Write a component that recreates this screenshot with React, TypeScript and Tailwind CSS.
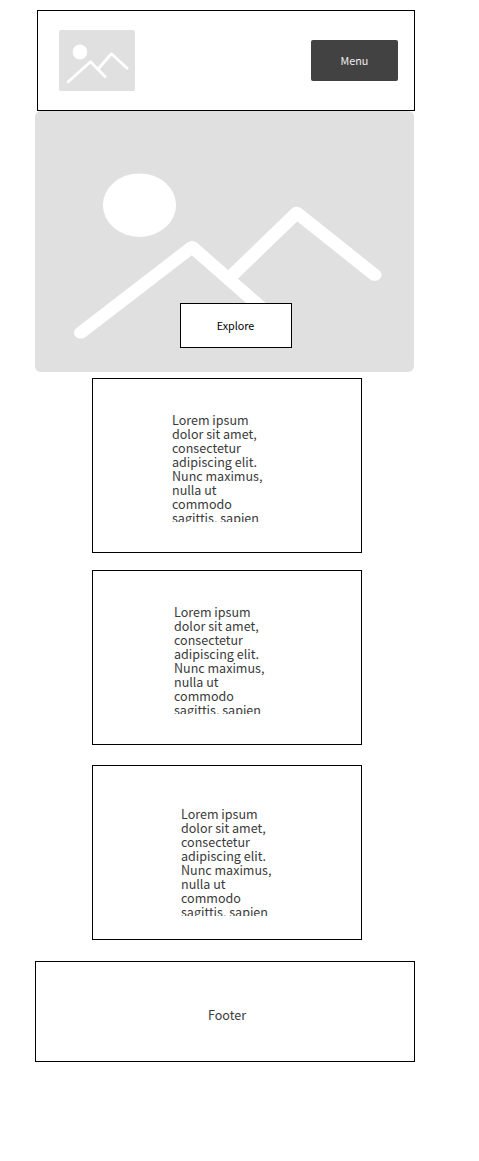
type CardProps = { className: string };

function Placeholder({ className }: { className: string }) {
  return (
    <svg viewBox="0 0 76 61" preserveAspectRatio="none" className={className} fill="none" aria-hidden="true">
      <ellipse cx="20.95" cy="22" rx="7.33" ry="7.42" fill="#fff" />
      <g stroke="#fff" strokeWidth="2.8" strokeLinecap="round" strokeLinejoin="round">
        <path d="M9.2 51.8 31.5 31.8 46.2 46.8" />
        <path d="M38.8 39.2 52.5 23.8 68.1 38.3" />
      </g>
    </svg>
  );
}

function Card({ className }: CardProps) {
  return (
    <section className={`ml-[57px] h-[175px] w-[270px] border border-black ${className}`}>
      <p className="h-[109px] w-[100px] overflow-hidden text-[12.54px] leading-[14px] text-[#3a3a3a]">
        Lorem ipsum
        <br />
        dolor sit amet,
        <br />
        consectetur
        <br />
        adipiscing elit.
        <br />
        Nunc maximus,
        <br />
        nulla ut
        <br />
        commodo
        <br />
        sagittis, sapien
      </p>
    </section>
  );
}

export default function App() {
  return (
    <div className="min-h-[1161px] bg-white pt-[10px] pl-[35px] font-['Noto_Sans_CJK_SC',sans-serif]">
      <header className="ml-[2px] flex h-[101px] w-[378px] items-start justify-between border border-black pt-[19px] pr-[16px] pl-[21px]">
        <Placeholder className="h-[61px] w-[76px] rounded-[2px] bg-[#e0e0e0]" />
        <button className="mt-[10px] flex h-[41px] w-[87px] items-center justify-center rounded-[2px] bg-[#424242] pt-[2px] text-[10.75px] text-[#eee]">
          Menu
        </button>
      </header>
      <main>
        <div className="relative h-[261px] w-[379px]">
          <Placeholder className="h-full w-full rounded-[6px] bg-[#e0e0e0]" />
          <button className="absolute top-[192px] left-[145px] flex h-[45px] w-[112px] items-center justify-center border border-black bg-white pt-[2px] pr-[1px] text-[10.75px] text-black">
            Explore
          </button>
        </div>
        <Card className="mt-[6px] pt-[34px] pl-[79px]" />
        <Card className="mt-[17px] pt-[34px] pl-[81px]" />
        <Card className="mt-[20px] pt-[41px] pl-[88px]" />
      </main>
      <footer className="mt-[21px] flex h-[101px] w-[380px] justify-center border border-black pt-[46px] pl-[4px] text-[12.54px] leading-[14px] text-[#3a3a3a]">
        Footer
      </footer>
    </div>
  );
}
